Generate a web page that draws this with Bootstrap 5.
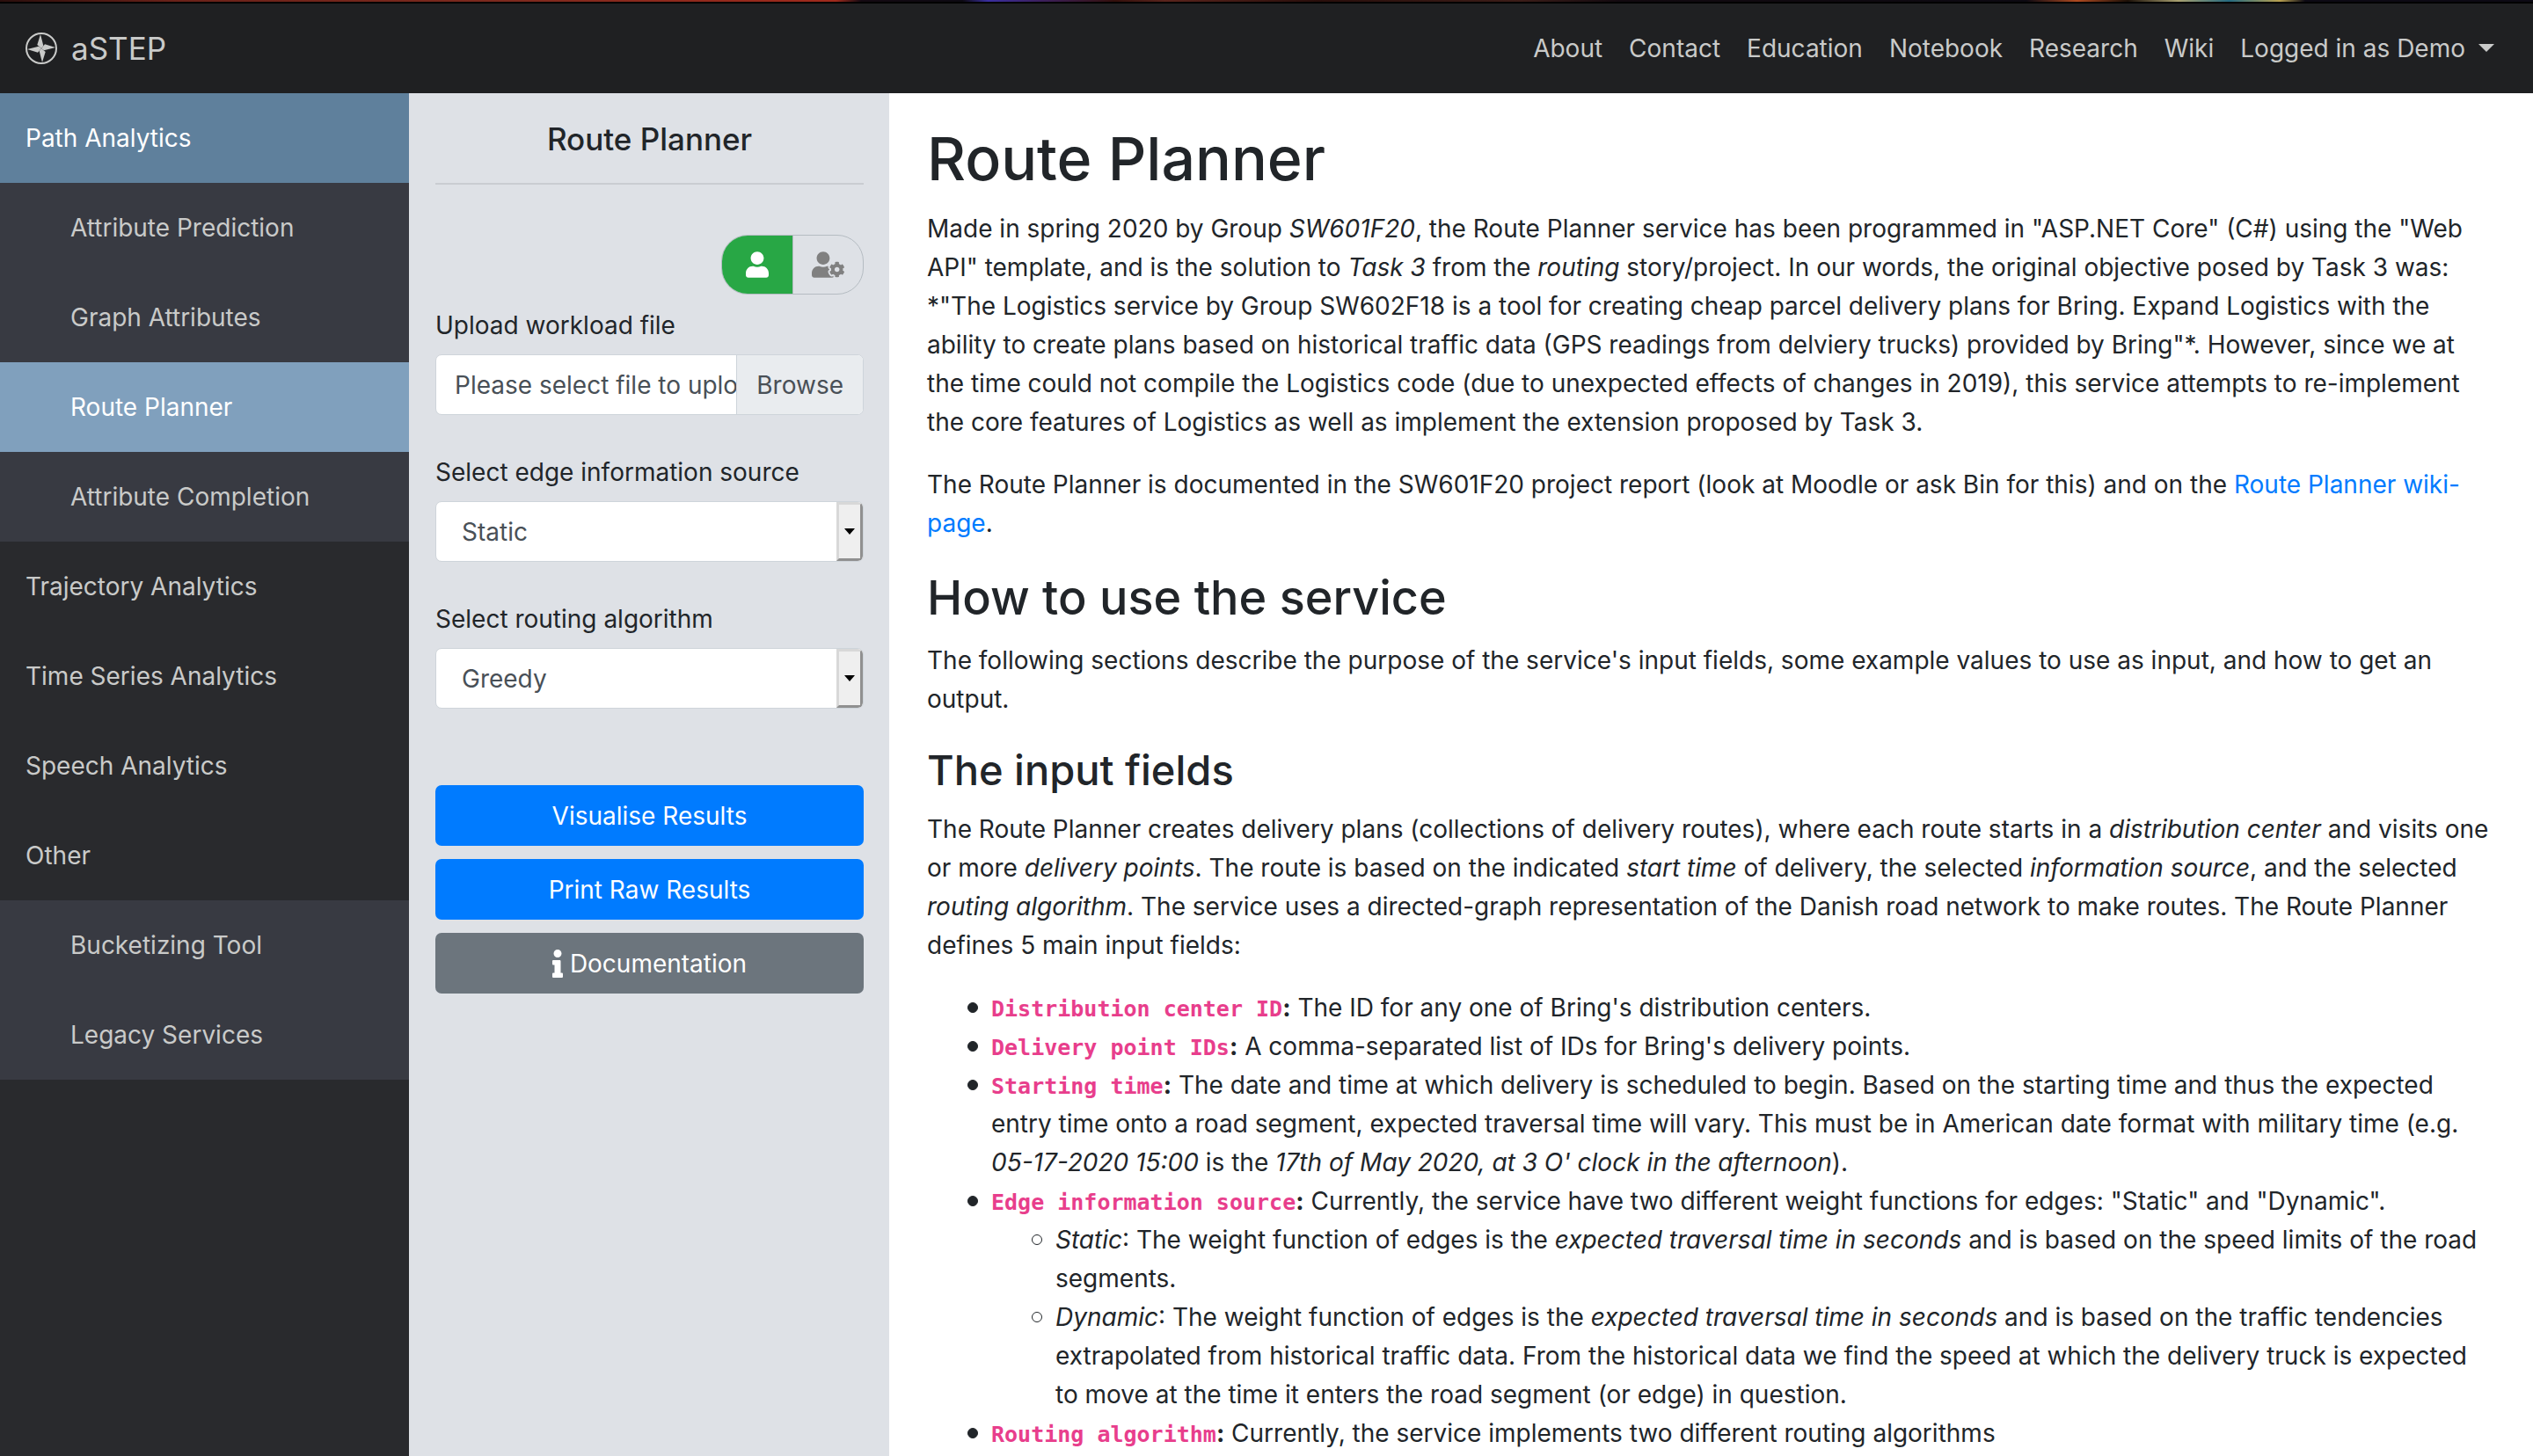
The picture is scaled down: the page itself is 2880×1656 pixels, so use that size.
<!DOCTYPE html>
<html lang="en">
<head>
<meta charset="utf-8">
<meta name="viewport" content="width=device-width, initial-scale=1">
<title>aSTEP - Route Planner</title>
<link rel="stylesheet" href="https://cdn.jsdelivr.net/npm/bootstrap@5.3.0/dist/css/bootstrap.min.css">
<style>
body{font-family:Inter,"Noto Sans",sans-serif;font-size:28px;line-height:44px;color:#212529;background:#292a2d;height:100vh;overflow:hidden}
.top-strip{height:4px;border-bottom:2px solid #000;background:linear-gradient(90deg,#2b0f0d 0,#6b2219 7%,#7d2a1e 20%,#a02a1c 33%,#140a12 34%,#0d0a12 38%,#3a2fa0 39%,#3c2060 41%,#34100c 44%,#5a241c 46%,#2a0f0c 52%,#3c1d18 60%,#120a10 64%,#0d0a12 80%,#b04a20 82%,#1c1008 84%,#a8a070 86%,#256a80 88%,#b8a050 90%,#0d0a14 91%)}
.app-nav{--bs-navbar-nav-link-padding-x:15px;height:102px;background:#1f2022;padding:0 29px}
.app-nav .navbar-brand{font-size:35px;color:#c9cac9;gap:16px;padding:0;margin:0}
.app-nav .nav-link{color:#c9cac9}
.app-nav .dropdown-toggle::after{margin-left:15px;border-width:9px 9px 0;vertical-align:6px}
.side{width:465px;background:#292a2d}
.side .list-group{--bs-list-group-border-radius:0}
.side .list-group-item{height:102px;display:flex;align-items:center;border:0;background:#292a2d;color:#c9cac9;padding:0 29px}
.side .list-group-item.sub{background:#383a42;padding-left:80px}
.side .list-group-item.top-active{background:#5f809c;color:#fff}
.side .list-group-item.sub-active{background:#80a0bd;color:#fff}
.panel{width:546px;background:#dee1e6;padding:30px 29px 0 30px}
.panel h2{font-size:35px;line-height:44px;margin:0;text-align:center;font-weight:500}
.panel hr{margin:28px 0 57px;border-top:2px solid #c9ccd1;opacity:1}
.mode{width:162px;height:68px;margin-bottom:13px;border:1px solid #b5bcc2;border-radius:30px;overflow:hidden}
.mode .btn{border:0;border-radius:0;padding:0;display:flex;align-items:center;justify-content:center;color:#808080;width:80px}
.mode .btn-check:checked+.btn{background:#28a745;color:#fff}
.mode .btn+.btn-check+.btn{border-left:1px solid #b5bcc2}
.form-label{margin:0 0 11px;font-size:28px}
.field{height:69px;margin-bottom:43px;border:1px solid #ced4da;border-radius:7px;background:#fff;color:#495057;overflow:hidden}
.field select{width:100%;height:100%;border:0;background:none;appearance:none;color:#495057;padding:0 29px;outline:0}
.arrow-btn{position:absolute;right:0;top:0;bottom:0;width:30px;background:#efefef;border:3px solid;border-color:#d8d8d8 #909090 #909090 #d8d8d8;pointer-events:none}
.file-text{flex:1 1 0;min-width:0;overflow:hidden;white-space:nowrap;padding-left:21px}
.file-browse{background:#e9ecef;border-left:1px solid #ced4da;padding:0 22px}
.field input[type=file]{position:absolute;inset:0;width:100%;height:100%;opacity:0}
.actions{gap:15px;padding-top:44px}
.actions .btn{height:69px;font-size:28px;padding:0;border:0;border-radius:7px;color:#fff}
.btn-run{background:#007bff}
.btn-doc{background:#6c757d}
.doc{background:#fff;padding:31px 43px 0 43px;overflow:hidden;min-width:0}
.doc h1{font-size:68px;line-height:87px;margin:0 0 14px}
.doc h2{font-size:54px;line-height:71px;margin:0 0 14px}
.doc h3{font-size:47px;line-height:63px;margin:0 0 14px}
.doc p{margin:0 0 27px}
.doc a{color:#007bff;text-decoration:none}
.doc ul{list-style:none;padding-left:73px;margin:0}
.doc li{position:relative}
.doc li::before{content:"";position:absolute;left:-27px;top:16px;width:12px;height:12px;border-radius:50%;border:1px solid #212529;background:#212529}
.doc li li::before{background:none}
.doc code{font-family:"DejaVu Sans Mono",monospace;font-size:25px;line-height:1;color:#e83e8c}
.doc b{font-weight:700}
</style>
<script src="https://cdn.jsdelivr.net/npm/bootstrap@5.3.0/dist/js/bootstrap.bundle.min.js"></script>
</head>
<body class="d-flex flex-column">
<div class="top-strip flex-shrink-0"></div>
<nav class="app-nav navbar navbar-expand flex-shrink-0">
  <a class="navbar-brand d-flex align-items-center" href="#">
    <svg width="36" height="36" viewBox="-54 -54 108 108" aria-hidden="true"><circle r="51" fill="none" stroke="#c9cac9" stroke-width="6"/><g fill="#c9cac9"><path d="M-3-48L-14-12 0 0 7-9Z"/><path d="M-3-48L-14-12 0 0 7-9Z" transform="rotate(90)"/><path d="M-3-48L-14-12 0 0 7-9Z" transform="rotate(180)"/><path d="M-3-48L-14-12 0 0 7-9Z" transform="rotate(270)"/></g></svg>
    aSTEP</a>
  <div class="navbar-nav ms-auto">
    <a class="nav-link" href="#">About</a>
    <a class="nav-link" href="#">Contact</a>
    <a class="nav-link" href="#">Education</a>
    <a class="nav-link" href="#">Notebook</a>
    <a class="nav-link" href="#">Research</a>
    <a class="nav-link" href="#">Wiki</a>
    <a class="nav-link dropdown-toggle" href="#" role="button" data-bs-toggle="dropdown">Logged in as Demo</a>
  </div>
</nav>
<div class="d-flex flex-grow-1 overflow-hidden">
  <aside class="side flex-shrink-0">
    <div class="list-group list-group-flush">
      <a class="list-group-item top-active" href="#">Path Analytics</a>
      <a class="list-group-item sub" href="#">Attribute Prediction</a>
      <a class="list-group-item sub" href="#">Graph Attributes</a>
      <a class="list-group-item sub sub-active" href="#">Route Planner</a>
      <a class="list-group-item sub" href="#">Attribute Completion</a>
      <a class="list-group-item" href="#">Trajectory Analytics</a>
      <a class="list-group-item" href="#">Time Series Analytics</a>
      <a class="list-group-item" href="#">Speech Analytics</a>
      <a class="list-group-item" href="#">Other</a>
      <a class="list-group-item sub" href="#">Bucketizing Tool</a>
      <a class="list-group-item sub" href="#">Legacy Services</a>
    </div>
  </aside>
  <section class="panel flex-shrink-0">
    <h2>Route Planner</h2>
    <hr>
    <form>
      <div class="mode d-flex ms-auto" role="group" aria-label="Mode">
        <input class="btn-check" type="radio" name="mode" id="mode-user" checked>
        <label class="btn" for="mode-user" aria-label="Basic"><svg width="26" height="30" viewBox="0 0 448 512" fill="currentColor"><path d="M224 256c70.700 0 128-57.300 128-128S294.700 0 224 0 96 57.300 96 128s57.300 128 128 128zm89.600 32h-16.700c-22.200 10.200-46.900 16-72.900 16s-50.600-5.800-72.900-16h-16.700C60.200 288 0 348.200 0 422.400V464c0 26.500 21.500 48 48 48h352c26.500 0 48-21.500 48-48v-41.600c0-74.200-60.200-134.400-134.400-134.400z"/></svg></label>
        <input class="btn-check" type="radio" name="mode" id="mode-adv">
        <label class="btn" for="mode-adv" aria-label="Advanced"><svg width="37" height="30" viewBox="0 0 640 512" fill="currentColor"><path d="M610.5 373.3c2.6-14.1 2.6-28.5 0-42.6l25.8-14.9c3-1.7 4.3-5.2 3.3-8.5-6.7-21.6-18.2-41.2-33.2-57.4-2.3-2.5-6-3.1-9-1.4l-25.8 14.9c-10.9-9.3-23.4-16.500-36.900-21.300v-29.800c0-3.400-2.400-6.400-5.700-7.100-22.300-5-45-4.800-66.200 0-3.300.7-5.700 3.700-5.700 7.100v29.800c-13.500 4.800-26 12-36.900 21.300l-25.800-14.900c-2.900-1.700-6.700-1.100-9 1.400-15 16.200-26.500 35.800-33.200 57.400-1 3.300.4 6.800 3.300 8.500l25.800 14.900c-2.600 14.100-2.600 28.500 0 42.600l-25.800 14.900c-3 1.700-4.300 5.200-3.300 8.500 6.700 21.600 18.200 41.100 33.200 57.400 2.300 2.500 6 3.100 9 1.400l25.800-14.900c10.900 9.300 23.400 16.500 36.900 21.300v29.800c0 3.400 2.400 6.400 5.700 7.100 22.300 5 45 4.800 66.200 0 3.300-.7 5.700-3.700 5.700-7.100v-29.800c13.500-4.800 26-12 36.900-21.300l25.800 14.900c2.900 1.700 6.700 1.100 9-1.400 15-16.200 26.500-35.800 33.200-57.400 1-3.300-.4-6.800-3.300-8.500l-25.800-14.900zM496 400.500c-26.800 0-48.500-21.800-48.500-48.500s21.800-48.500 48.500-48.500 48.500 21.800 48.500 48.500-21.700 48.500-48.500 48.500zM224 256c70.700 0 128-57.300 128-128S294.700 0 224 0 96 57.300 96 128s57.300 128 128 128zm201.200 226.500c-2.300-1.200-4.600-2.600-6.800-3.900l-7.900 4.600c-6 3.400-12.800 5.300-19.600 5.300-10.900 0-21.400-4.600-28.900-12.600-18.300-19.800-32.300-43.900-40.200-69.600-5.500-17.700 1.900-36.400 17.900-45.700l7.900-4.600c-.1-2.600-.1-5.200 0-7.800l-7.900-4.600c-16-9.200-23.400-28-17.900-45.700.9-2.900 2.200-5.800 3.200-8.700-3.800-.3-7.500-1.200-11.400-1.200h-16.700c-22.200 10.200-46.900 16-72.900 16s-50.600-5.800-72.900-16h-16.700C60.200 288 0 348.200 0 422.400V464c0 26.500 21.500 48 48 48h352c10.100 0 19.500-3.200 27.200-8.500-1.200-3.800-2-7.700-2-11.800v-9.200z"/></svg></label>
      </div>
      <label class="form-label d-block" for="workload">Upload workload file</label>
      <div class="field position-relative d-flex">
        <span class="file-text align-self-center">Please select file to upload</span>
        <span class="file-browse d-flex align-items-center">Browse</span>
        <input type="file" id="workload">
      </div>
      <label class="form-label d-block" for="edge">Select edge information source</label>
      <div class="field position-relative">
        <select id="edge"><option>Static</option><option>Dynamic</option></select>
        <span class="arrow-btn d-flex align-items-center justify-content-center"><svg width="12" height="7" viewBox="0 0 12 7"><path d="M0 0h12L6 7z"/></svg></span>
      </div>
      <label class="form-label d-block" for="algo">Select routing algorithm</label>
      <div class="field position-relative">
        <select id="algo"><option>Greedy</option></select>
        <span class="arrow-btn d-flex align-items-center justify-content-center"><svg width="12" height="7" viewBox="0 0 12 7"><path d="M0 0h12L6 7z"/></svg></span>
      </div>
      <div class="actions d-grid">
        <button type="button" class="btn btn-run">Visualise Results</button>
        <button type="button" class="btn btn-run">Print Raw Results</button>
        <button type="button" class="btn btn-doc d-flex align-items-center justify-content-center gap-2"><svg width="12" height="34" viewBox="0 0 192 512" fill="currentColor"><path d="M20 424.229h20V279.771H20c-11.046 0-20-8.954-20-20V212c0-11.046 8.954-20 20-20h112c11.046 0 20 8.954 20 20v212.229h20c11.046 0 20 8.954 20 20V492c0 11.046-8.954 20-20 20H20c-11.046 0-20-8.954-20-20v-47.771c0-11.046 8.954-20 20-20zM96 0C56.235 0 24 32.235 24 72s32.235 72 72 72 72-32.235 72-72S135.764 0 96 0z"/></svg>Documentation</button>
      </div>
    </form>
  </section>
  <main class="doc flex-grow-1">
    <h1>Route Planner</h1>
    <p>Made in spring 2020 by Group <em>SW601F20</em>, the Route Planner service has been programmed in "ASP.NET Core" (C#) using the "Web API" template, and is the solution to <em>Task 3</em> from the <em>routing</em> story/project. In our words, the original objective posed by Task 3 was: *"The Logistics service by Group SW602F18 is a tool for creating cheap parcel delivery plans for Bring. Expand Logistics with the ability to create plans based on historical traffic data (GPS readings from delviery trucks) provided by Bring"*. However, since we at the time could not compile the Logistics code (due to unexpected effects of changes in 2019), this service attempts to re-implement the core features of Logistics as well as implement the extension proposed by Task 3.</p>
    <p>The Route Planner is documented in the SW601F20 project report (look at Moodle or ask Bin for this) and on the <a href="#">Route Planner wiki-page</a>.</p>
    <h2>How to use the service</h2>
    <p>The following sections describe the purpose of the service's input fields, some example values to use as input, and how to get an output.</p>
    <h3>The input fields</h3>
    <p>The Route Planner creates delivery plans (collections of delivery routes), where each route starts in a <em>distribution center</em> and visits one or more <em>delivery points</em>. The route is based on the indicated <em>start time</em> of delivery, the selected <em>information source</em>, and the selected <em>routing algorithm</em>. The service uses a directed-graph representation of the Danish road network to make routes. The Route Planner defines 5 main input fields:</p>
    <ul>
      <li><b><code>Distribution center ID</code>:</b> The ID for any one of Bring's distribution centers.</li>
      <li><b><code>Delivery point IDs</code>:</b> A comma-separated list of IDs for Bring's delivery points.</li>
      <li><b><code>Starting time</code>:</b> The date and time at which delivery is scheduled to begin. Based on the starting time and thus the expected entry time onto a road segment, expected traversal time will vary. This must be in American date format with military time (e.g. <em>05-17-2020 15:00</em> is the <em>17th of May 2020, at 3 O' clock in the afternoon</em>).</li>
      <li><b><code>Edge information source</code>:</b> Currently, the service have two different weight functions for edges: "Static" and "Dynamic".
        <ul>
          <li><em>Static</em>: The weight function of edges is the <em>expected traversal time in seconds</em> and is based on the speed limits of the road segments.</li>
          <li><em>Dynamic</em>: The weight function of edges is the <em>expected traversal time in seconds</em> and is based on the traffic tendencies extrapolated from historical traffic data. From the historical data we find the speed at which the delivery truck is expected to move at the time it enters the road segment (or edge) in question.</li>
        </ul>
      </li>
      <li><b><code>Routing algorithm</code>:</b> Currently, the service implements two different routing algorithms</li>
    </ul>
  </main>
</div>
</body>
</html>
